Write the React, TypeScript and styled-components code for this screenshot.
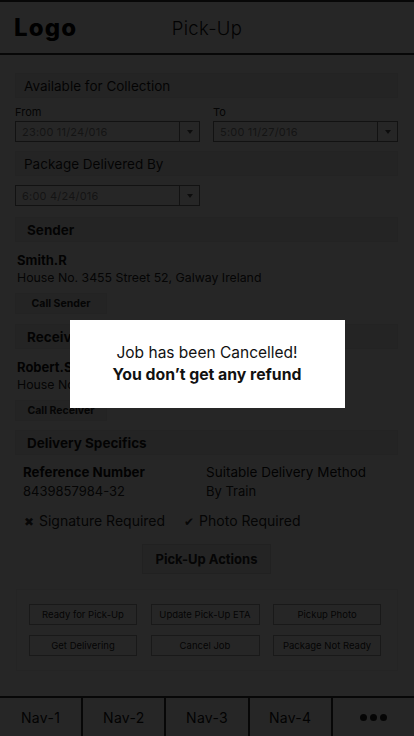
import React from "react"
import styled, { createGlobalStyle } from "styled-components"

const Global = createGlobalStyle`
  html, body {
    margin: 0;
    padding: 0;
    background: #fff;
    font-family: "Inter", "Noto Sans", sans-serif;
    color: #111;
  }
  * { box-sizing: border-box; }
`

const Page = styled.div`
  height: 736px;
  display: flex;
  flex-direction: column;
  overflow: hidden;
`

const Header = styled.header`
  height: 55px;
  border-top: 2px solid #333;
  border-bottom: 2px solid #333;
  display: grid;
  grid-template-columns: 1fr auto 1fr;
  align-items: center;
  padding: 0 14px;
  flex-shrink: 0;

  .logo {
    font-size: 24px;
    font-weight: 800;
    color: #000;
    letter-spacing: 1.2px;
  }
  .title {
    font-size: 18.5px;
    font-weight: 300;
    color: #111;
    letter-spacing: 0.3px;
  }
`

const Main = styled.main`
  flex: 1;
  padding: 18px 16px 0 15px;
`

const Bar = styled.div<{ $bold?: boolean; $gap?: number }>`
  height: 25px;
  margin-top: ${p => p.$gap ?? 0}px;
  background: #f2f2f2;
  border: 1px solid #ececec;
  display: flex;
  align-items: center;
  padding-left: ${p => (p.$bold ? "11px" : "8px")};
  font-size: 13.5px;
  font-weight: ${p => (p.$bold ? 700 : 400)};
  color: #1a1a1a;
`

const FieldRow = styled.div<{ $gap: number }>`
  display: flex;
  gap: 13px;
  margin-top: ${p => p.$gap}px;
`

const Field = styled.div`
  width: 185px;
`

const Label = styled.div`
  font-size: 11px;
  color: #222;
  line-height: 13px;
  margin-bottom: 2px;
`

const Select = styled.div`
  height: 21px;
  border: 1px solid #777;
  display: flex;
  align-items: center;
  font-size: 11px;
  letter-spacing: 0.2px;
  color: #888;

  .value {
    flex: 1;
    padding-left: 6px;
  }
  .arrow {
    width: 20px;
    height: 100%;
    border-left: 1px solid #777;
    display: flex;
    align-items: center;
    justify-content: center;
  }
  .arrow::after {
    content: "";
    border-left: 3.5px solid transparent;
    border-right: 3.5px solid transparent;
    border-top: 4px solid #555;
  }
`

const Person = styled.div`
  padding: 9px 2px 0;
  .name {
    font-size: 13px;
    font-weight: 700;
    color: #111;
    line-height: 18px;
  }
  .addr {
    font-size: 12.3px;
    color: #222;
    line-height: 18px;
  }
`

const SmallButton = styled.div`
  display: flex;
  align-items: center;
  justify-content: center;
  width: 92px;
  height: 21px;
  margin-top: 6px;
  background: #f2f2f2;
  border: 1px solid #e6e6e6;
  font-size: 10.5px;
  font-weight: 700;
  color: #222;
`

const Specifics = styled.div`
  display: grid;
  grid-template-columns: 183px 1fr;
  padding: 8px 8px 0;
  .k {
    font-size: 13.5px;
    line-height: 19px;
    color: #111;
  }
  .k.b {
    font-weight: 700;
    font-size: 13.3px;
  }
  .v {
    font-size: 13px;
    line-height: 19px;
    color: #222;
  }
`

const Checks = styled.div`
  display: flex;
  gap: 19px;
  padding: 11px 8px 0 9px;
  font-size: 14px;
  color: #222;
  span.ic {
    font-size: 12px;
    margin-right: 5px;
    color: #333;
  }
`

const Center = styled.div`
  display: flex;
  justify-content: center;
  margin-top: 15px;
`

const ActionsButton = styled.div`
  width: 129px;
  height: 30px;
  display: flex;
  align-items: center;
  justify-content: center;
  background: #eee;
  border: 1px solid #ddd;
  font-size: 13px;
  font-weight: 700;
  color: #222;
`

const ActionsBox = styled.div`
  margin-top: 15px;
  margin-left: 1px;
  border: 1px solid #f0f0f0;
  padding: 14px 16px 14px 12px;
  display: grid;
  grid-template-columns: 108px 109px 108px;
  justify-content: space-between;
  row-gap: 10px;
`

const ActionButton = styled.div`
  height: 21px;
  border: 1px solid #aaa;
  display: flex;
  align-items: center;
  justify-content: center;
  font-size: 9.5px;
  color: #222;
  white-space: nowrap;
`

const Nav = styled.nav`
  height: 40px;
  border-top: 2px solid #333;
  display: flex;
  flex-shrink: 0;
`

const NavItem = styled.div<{ $last?: boolean }>`
  flex: 1;
  display: flex;
  align-items: center;
  justify-content: center;
  font-size: 14px;
  color: #111;
  border-right: ${p => (p.$last ? "none" : "2px solid #333")};
  letter-spacing: 0.3px;
`

const Dots = styled.div`
  display: flex;
  gap: 3px;
  span {
    width: 7px;
    height: 7px;
    border-radius: 50%;
    background: #222;
  }
`

const Overlay = styled.div`
  position: fixed;
  inset: 0;
  background: rgba(0, 0, 0, 0.85);
  display: flex;
  align-items: center;
  justify-content: center;
`

const Modal = styled.div`
  width: 275px;
  height: 88px;
  margin-top: -8px;
  background: #fff;
  display: flex;
  flex-direction: column;
  align-items: center;
  justify-content: center;
  color: #111;
  p {
    margin: 0;
    font-size: 15.5px;
    line-height: 22px;
  }
  p.b {
    font-weight: 700;
    font-size: 15.8px;
  }
`

const SelectBox = ({ value }: { value: string }) => (
  <Select>
    <span className="value">{value}</span>
    <span className="arrow" />
  </Select>
)

const actions = [
  "Ready for Pick-Up",
  "Update Pick-Up ETA",
  "Pickup Photo",
  "Get Delivering",
  "Cancel Job",
  "Package Not Ready",
]

const App = () => {
  return (
    <>
      <Global />
      <Page>
        <Header>
          <span className="logo">Logo</span>
          <span className="title">Pick-Up</span>
          <span />
        </Header>
        <Main>
          <Bar>Available for Collection</Bar>
          <FieldRow $gap={8}>
            <Field>
              <Label>From</Label>
              <SelectBox value="23:00 11/24/016" />
            </Field>
            <Field>
              <Label>To</Label>
              <SelectBox value="5:00 11/27/016" />
            </Field>
          </FieldRow>
          <Bar $gap={9}>Package Delivered By</Bar>
          <FieldRow $gap={9}>
            <Field>
              <SelectBox value="6:00  4/24/016" />
            </Field>
          </FieldRow>
          <Bar $bold $gap={11}>Sender</Bar>
          <Person>
            <div className="name">Smith.R</div>
            <div className="addr">House No. 3455 Street 52, Galway Ireland</div>
          </Person>
          <SmallButton>Call Sender</SmallButton>
          <Bar $bold $gap={10}>Receiver</Bar>
          <Person>
            <div className="name">Robert.S</div>
            <div className="addr">House No. 1201 Street 8, Dublin Ireland</div>
          </Person>
          <SmallButton>Call Receiver</SmallButton>
          <Bar $bold $gap={9}>Delivery Specifics</Bar>
          <Specifics>
            <div className="k b">Reference Number</div>
            <div className="k">Suitable Delivery Method</div>
            <div className="v">8439857984-32</div>
            <div className="v">By Train</div>
          </Specifics>
          <Checks>
            <span><span className="ic">✖</span>Signature Required</span>
            <span><span className="ic">✔</span>Photo Required</span>
          </Checks>
          <Center>
            <ActionsButton>Pick-Up Actions</ActionsButton>
          </Center>
          <ActionsBox>
            {actions.map(a => (
              <ActionButton key={a}>{a}</ActionButton>
            ))}
          </ActionsBox>
        </Main>
        <Nav>
          <NavItem>Nav-1</NavItem>
          <NavItem>Nav-2</NavItem>
          <NavItem>Nav-3</NavItem>
          <NavItem>Nav-4</NavItem>
          <NavItem $last>
            <Dots><span /><span /><span /></Dots>
          </NavItem>
        </Nav>
      </Page>
      <Overlay>
        <Modal>
          <p>Job has been Cancelled!</p>
          <p className="b">You don’t get any refund</p>
        </Modal>
      </Overlay>
    </>
  )
}

export default App
